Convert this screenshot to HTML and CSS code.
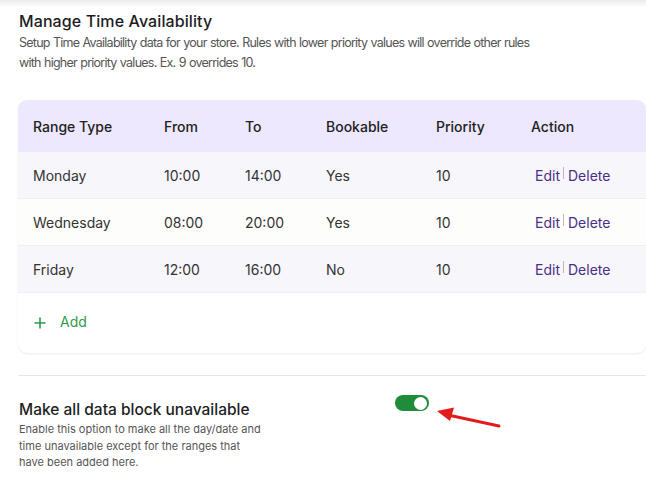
FILE: index.html
```html
<!DOCTYPE html>
<html>
<head>
<meta charset="utf-8">
<link rel="stylesheet" href="styles.css">
</head>
<body>
<div class="topshade"></div>
<main class="page">
  <section class="intro">
    <h1 class="title">Manage Time Availability</h1>
    <p class="desc">Setup Time Availability data for your store. Rules with lower priority values will override other rules with higher priority values. Ex. 9 overrides 10.</p>
  </section>

  <div class="card">
    <div class="row head">
      <div class="cell">Range Type</div>
      <div class="cell">From</div>
      <div class="cell">To</div>
      <div class="cell">Bookable</div>
      <div class="cell">Priority</div>
      <div class="cell">Action</div>
    </div>
    <div class="row odd">
      <div class="cell">Monday</div>
      <div class="cell">10:00</div>
      <div class="cell">14:00</div>
      <div class="cell">Yes</div>
      <div class="cell">10</div>
      <div class="cell actions"><a class="link">Edit</a><span class="sep"></span><a class="link">Delete</a></div>
    </div>
    <div class="row even">
      <div class="cell">Wednesday</div>
      <div class="cell">08:00</div>
      <div class="cell">20:00</div>
      <div class="cell">Yes</div>
      <div class="cell">10</div>
      <div class="cell actions"><a class="link">Edit</a><span class="sep"></span><a class="link">Delete</a></div>
    </div>
    <div class="row odd">
      <div class="cell">Friday</div>
      <div class="cell">12:00</div>
      <div class="cell">16:00</div>
      <div class="cell">No</div>
      <div class="cell">10</div>
      <div class="cell actions"><a class="link">Edit</a><span class="sep"></span><a class="link">Delete</a></div>
    </div>
    <div class="addrow">
      <span class="plus">
        <svg width="12" height="12" viewBox="0 0 12 12"><path d="M6 0.5v11M0.5 6h11" stroke="#2f9a48" stroke-width="1.6" fill="none"/></svg>
      </span>
      <span class="addtext">Add</span>
    </div>
  </div>

  <hr class="divider">

  <section class="option">
    <div class="optext">
      <h2 class="optitle">Make all data block unavailable</h2>
      <p class="opdesc">Enable this option to make all the day/date and time unavailable except for the ranges that have been added here.</p>
    </div>
    <div class="toggle"><span class="knob"></span></div>
  </section>
</main>
<svg class="arrow" width="66" height="26" viewBox="0 0 66 26">
  <line x1="63" y1="23" x2="12" y2="12" stroke="#e41b1b" stroke-width="3" stroke-linecap="round"/>
  <polygon points="1,8 18,4.5 14,18" fill="#e41b1b"/>
</svg>
</body>
</html>
```

FILE: styles.css
```css
* { box-sizing: border-box; }
html, body { margin: 0; padding: 0; background: #fff; }
body {
  font-family: Inter, "Noto Sans", sans-serif;
  color: #222;
  width: 646px;
  height: 477px;
  overflow: hidden;
  position: relative;
}
.topshade {
  height: 7px;
  background: linear-gradient(#ebebeb, #ffffff);
}
.page {
  padding-left: 18px;
}
.intro {
  padding-left: 1px;
}
.title {
  margin: 3px 0 0;
  font-size: 16px;
  line-height: 22px;
  font-weight: 500;
  color: #1d1d1f;
  letter-spacing: 0.1px;
}
.desc {
  margin: 1px 0 0;
  font-size: 12.5px;
  line-height: 20px;
  color: #555;
  width: 530px;
  letter-spacing: -0.75px;
  word-spacing: 0.5px;
}
.card {
  margin-top: 27px;
  width: 628px;
  border-radius: 9px;
  overflow: hidden;
  background: #fff;
  box-shadow: 0 1px 2px rgba(0,0,0,0.08);
}
.row {
  display: grid;
  grid-template-columns: 131px 81px 81px 110px 95px 1fr;
  align-items: center;
  border-bottom: 1px solid #efeff2;
  font-size: 14px;
  color: #333;
}
.cell {
  padding-left: 15px;
  white-space: nowrap;
}
.head {
  height: 52px;
  background: #ede8fd;
  font-weight: 500;
  color: #222;
  border-bottom: none;
}
.odd { height: 47px; background: #f7f6fb; }
.even { height: 47px; background: #fdfdfb; }
.actions {
  padding-left: 19px;
  display: flex;
  align-items: center;
}
.link {
  color: #4a2f86;
}
.sep {
  display: inline-block;
  width: 1px;
  height: 12px;
  background: #bbb;
  margin: -5px 4px 0 3px;
}
.addrow {
  height: 60px;
  display: flex;
  align-items: center;
  padding-left: 16px;
  padding-bottom: 3px;
  color: #2f9a48;
  font-size: 14px;
}
.plus {
  display: flex;
  width: 12px;
  height: 12px;
  margin-right: 14px;
  margin-top: 2px;
}
.divider {
  margin: 22px 0 0;
  border: none;
  border-top: 1px solid #e6e6e6;
}
.option {
  display: flex;
  align-items: flex-start;
  padding-top: 23px;
  padding-left: 1px;
}
.optext {
  width: 245px;
}
.optitle {
  margin: 0;
  font-size: 15.5px;
  line-height: 22px;
  font-weight: 500;
  color: #1d1d1f;
}
.opdesc {
  margin: 0;
  font-size: 11px;
  line-height: 16.5px;
  color: #555;
}
.toggle {
  margin-left: 131px;
  margin-top: -4px;
  width: 34px;
  height: 16px;
  border-radius: 8px;
  background: #1f8c3a;
  display: flex;
  align-items: center;
  justify-content: flex-end;
  padding-right: 2px;
}
.knob {
  width: 13px;
  height: 13px;
  border-radius: 50%;
  background: #fff;
}
.arrow {
  position: absolute;
  left: 436px;
  top: 403px;
}
```
